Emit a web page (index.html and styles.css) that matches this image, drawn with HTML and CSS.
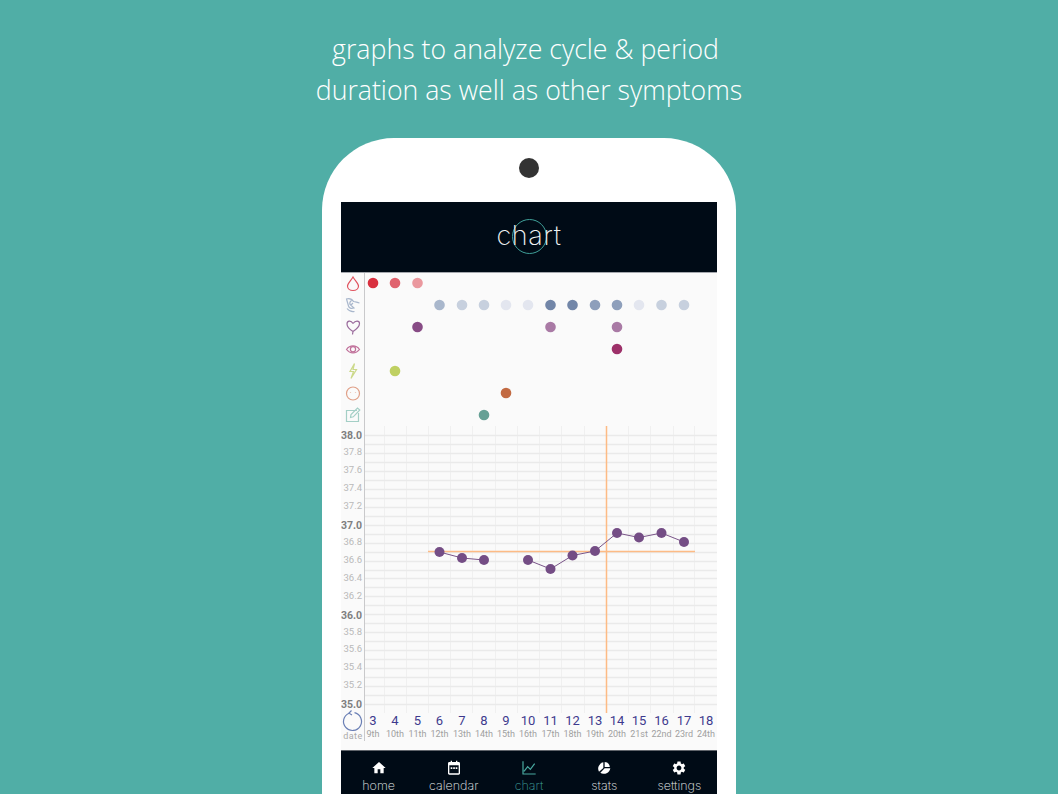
FILE: index.html
```html
<!DOCTYPE html>
<html lang="en">
<head>
<meta charset="utf-8">
<title>chart</title>
<link rel="stylesheet" href="styles.css">
</head>
<body>
<h1 class="headline">graphs to analyze cycle &amp; period&nbsp;<br>duration as well as other symptoms</h1>
<div class="phone">
  <div class="camera"></div>
  <div class="screen">
    <header class="appbar"><span class="ring"></span><span class="apptitle">chart</span></header>
    <svg class="chart" width="376" height="477" viewBox="341 273 376 477">
      <!-- vertical grid -->
      <g class="grid-v">
        <path d="M384.5 426V713M406.5 426V713M428.5 426V713M450.5 426V713M472.5 426V713M495.5 426V713M517.5 426V713M539.5 426V713M561.5 426V713M584.5 426V713M628.5 426V713M650.5 426V713M673.5 426V713M694.5 426V713"/>
      </g>
      <g class="grid-h">
        <path d="M365 435.500H717M365 444.500H717M365 453.500H717M365 462.500H717M365 471.500H717M365 480.500H717M365 489.500H717M365 498.500H717M365 507.500H717M365 516.500H717M365 525.500H717M365 534.500H717M365 543.500H717M365 552.500H717M365 561.500H717M365 570.500H717M365 578.500H717M365 587.500H717M365 596.500H717M365 605.500H717M365 614.500H717M365 623.500H717M365 632.500H717M365 641.500H717M365 650.500H717M365 659.500H717M365 668.500H717M365 677.500H717M365 686.500H717M365 695.500H717M365 704.500H717"/>
      </g>
      <path class="axis" d="M364.500 273V741"/>
      <path class="refline" d="M428 551.500H695M606.500 426V713"/>
      <polyline class="templine" points="439.500,552 462,558 484,560"/>
      <polyline class="templine" points="528,560 550.500,569 572.500,555.500 595,551 617,533 639,537.500 661.500,533 684,542"/>
      <g class="temp">
        <circle cx="439.500" cy="552" r="5"/><circle cx="462" cy="558" r="5"/><circle cx="484" cy="560" r="5"/>
        <circle cx="528" cy="560" r="5"/><circle cx="550.500" cy="569" r="5"/><circle cx="572.500" cy="555.500" r="5"/>
        <circle cx="595" cy="551" r="5"/><circle cx="617" cy="533" r="5"/><circle cx="639" cy="537.500" r="5"/>
        <circle cx="661.500" cy="533" r="5"/><circle cx="684" cy="542" r="5"/>
      </g>

      <!-- symptom dots -->
      <g class="dots">
        <circle class="d-red1" cx="373" cy="283"/><circle class="d-red2" cx="395" cy="283"/><circle class="d-red3" cx="417.500" cy="283"/>
        <circle class="d-b2" cx="439.500" cy="305"/><circle class="d-b3" cx="462" cy="305"/><circle class="d-b3" cx="484" cy="305"/>
        <circle class="d-b4" cx="506" cy="305"/><circle class="d-b4" cx="528" cy="305"/><circle class="d-b0" cx="550.500" cy="305"/>
        <circle class="d-b0" cx="572.500" cy="305"/><circle class="d-b1" cx="595" cy="305"/><circle class="d-b1" cx="617" cy="305"/>
        <circle class="d-b4" cx="639" cy="305"/><circle class="d-b3" cx="661.500" cy="305"/><circle class="d-b3" cx="684" cy="305"/>
        <circle class="d-p0" cx="417.500" cy="327"/><circle class="d-p1" cx="550.500" cy="327"/><circle class="d-p1" cx="617" cy="327"/>
        <circle class="d-mag" cx="617" cy="349"/>
        <circle class="d-lime" cx="395" cy="371"/>
        <circle class="d-org" cx="506" cy="393"/>
        <circle class="d-teal" cx="484" cy="415"/>
      </g>

      <!-- symptom icons -->
      <g class="ic ic-red"><path d="M353 277C350.500 281 347.500 283.500 347.500 286C347.500 288.800 350 290.500 353 290.500C356 290.500 358.500 288.800 358.500 286C358.500 283.500 355.500 281 353 277Z"/></g>
      <g class="ic ic-blue"><path d="M346 299C349 298 352 299 353.500 301.500C355 301.500 357 302.500 359.500 303M346.500 299L348.500 306C349 308 351 309 354 308L350 304.500C349.500 303 350 301.500 351.500 300.500M353 303L351 305M347 308.500C349 311 352 312 354.500 311.500"/></g>
      <g class="ic ic-purple"><path d="M353 323.500C351 320 347 320.500 347 324C347 327.500 350.500 330 353 331.500L352.500 334.500M353 331.500C356 329.500 359.500 327 359.500 323.500C359.500 320.500 355.500 320 353 323.500"/></g>
      <g class="ic ic-mag"><path d="M346.500 349.500C350 344.800 356 344.800 359.500 349.500C356 354 350 354 346.500 349.500Z"/><circle cx="353" cy="349.300" r="2.600"/></g>
      <g class="ic ic-lime"><path d="M354.500 363.500L350 371.500H353.500L351 378.500L356.500 369.500H353Z"/></g>
      <g class="ic ic-org"><circle cx="353" cy="393.500" r="6.500"/><path d="M350.500 392.500V393M355.500 392.500V393"/></g>
      <g class="ic ic-teal"><path d="M357 410.500H346.500V421.500H358.500V413"/><path d="M350.500 417.500L351 414.500L357.500 408L359.800 410L353.300 416.800Z"/></g>

      <!-- temperature axis -->
      <g class="t-major">
        <text x="362" y="439">38.0</text><text x="362" y="529">37.0</text><text x="362" y="619">36.0</text><text x="362" y="708">35.0</text>
      </g>
      <g class="t-minor">
        <text x="362" y="455">37.8</text><text x="362" y="473">37.6</text><text x="362" y="491">37.4</text><text x="362" y="509">37.2</text>
        <text x="362" y="545">36.8</text><text x="362" y="563">36.6</text><text x="362" y="581">36.4</text><text x="362" y="599">36.2</text>
        <text x="362" y="635">35.8</text><text x="362" y="652">35.6</text><text x="362" y="670">35.4</text><text x="362" y="688">35.2</text>
      </g>

      <!-- cycle day / date -->
      <path class="cycle" d="M349 713.200A9 9 0 1 0 354.500 712.700"/>
      <path class="cycle" d="M351.500 710.500L349 713.200L352 715"/>
      <text class="datelabel" x="353" y="739">date</text>
      <g class="day">
        <text x="373" y="725">3</text><text x="395" y="725">4</text><text x="417.500" y="725">5</text><text x="439.500" y="725">6</text>
        <text x="462" y="725">7</text><text x="484" y="725">8</text><text x="506" y="725">9</text><text x="528" y="725">10</text>
        <text x="550.500" y="725">11</text><text x="572.500" y="725">12</text><text x="595" y="725">13</text><text x="617" y="725">14</text>
        <text x="639" y="725">15</text><text x="661.500" y="725">16</text><text x="684" y="725">17</text><text x="706" y="725">18</text>
      </g>
      <g class="date">
        <text x="373" y="737">9th</text><text x="395" y="737">10th</text><text x="417.500" y="737">11th</text><text x="439.500" y="737">12th</text>
        <text x="462" y="737">13th</text><text x="484" y="737">14th</text><text x="506" y="737">15th</text><text x="528" y="737">16th</text>
        <text x="550.500" y="737">17th</text><text x="572.500" y="737">18th</text><text x="595" y="737">19th</text><text x="617" y="737">20th</text>
        <text x="639" y="737">21st</text><text x="661.500" y="737">22nd</text><text x="684" y="737">23rd</text><text x="706" y="737">24th</text>
      </g>
    </svg>
    <nav class="tabs">
      <div class="tab">
        <svg class="tabicon" viewBox="0 0 24 24"><path d="M10 20v-6h4v6h5v-8h3L12 3 2 12h3v8z"/></svg>
        <span>home</span>
      </div>
      <div class="tab">
        <svg class="tabicon" viewBox="0 0 24 24"><path fill-rule="evenodd" d="M7 1h2v2h6V1h2v2h2c1.100 0 2 .9 2 2v15c0 1.100-.9 2-2 2H5c-1.100 0-2-.9-2-2V5c0-1.100.9-2 2-2h2zM5 8v12h14V8zM7 11h2.500v2.500H7zM10.800 11h2.500v2.500h-2.500zM14.500 11H17v2.500h-2.500z"/></svg>
        <span>calendar</span>
      </div>
      <div class="tab tab-active">
        <svg class="tabicon" viewBox="0 0 24 24"><path class="tabstroke" d="M3 2v19h19M4.500 17l5.500-7 4 4 6.500-8.500"/></svg>
        <span>chart</span>
      </div>
      <div class="tab">
        <svg class="tabicon" viewBox="0 0 24 24"><path d="M11 3.500V12L4.500 17.500A9.500 9.500 0 0 1 11 3.500ZM13 3V10.500H20.800A8.500 8.500 0 0 0 13 3ZM21.500 12.500H13L6.500 19A9.500 9.500 0 0 0 21.500 12.500Z"/></svg>
        <span>stats</span>
      </div>
      <div class="tab">
        <svg class="tabicon" viewBox="0 0 24 24"><path d="M19.140 12.940c.04-.3.06-.61.06-.94 0-.32-.02-.64-.07-.94l2.030-1.580c.18-.14.23-.41.12-.61l-1.920-3.320c-.12-.22-.37-.29-.59-.22l-2.390.96c-.5-.38-1.030-.7-1.620-.94l-.36-2.540c-.04-.24-.24-.41-.48-.41h-3.840c-.24 0-.43.17-.47.41l-.36 2.540c-.59.24-1.130.57-1.620.94l-2.390-.96c-.22-.08-.47 0-.59.22L2.740 8.870c-.12.21-.08.47.12.61l2.030 1.580c-.05.3-.09.63-.09.94s.02.64.07.94l-2.030 1.580c-.18.14-.23.41-.12.61l1.920 3.320c.12.22.37.29.59.22l2.390-.96c.5.38 1.030.7 1.620.94l.36 2.540c.05.24.24.41.48.41h3.840c.24 0 .44-.17.47-.41l.36-2.540c.59-.24 1.130-.56 1.620-.94l2.390.96c.22.08.47 0 .59-.22l1.920-3.320c.12-.22.07-.47-.12-.61l-2.010-1.580zM12 15.600c-1.980 0-3.600-1.620-3.600-3.600s1.620-3.600 3.600-3.600 3.600 1.620 3.600 3.600-1.620 3.600-3.600 3.600z"/></svg>
        <span>settings</span>
      </div>
    </nav>
  </div>
</div>
</body>
</html>
```

FILE: styles.css
```css
* { box-sizing: border-box; }
html, body { margin: 0; height: 100%; overflow: hidden; }
body {
  background: #50aea6;
  font-family: "Open Sans", sans-serif;
  display: flex;
  flex-direction: column;
  align-items: center;
}
.headline {
  margin: 28px 0 28px;
  font-size: 26.700px;
  line-height: 41px;
  font-weight: 300;
  color: #fff;
  text-align: center;
}
.phone {
  flex: none;
  width: 414px;
  height: 720px;
  background: #fff;
  border-radius: 72px 72px 0 0;
  padding-top: 20px;
  display: flex;
  flex-direction: column;
  align-items: center;
}
.camera {
  width: 20px;
  height: 20px;
  border-radius: 50%;
  background: #333;
  margin-bottom: 24px;
}
.screen { width: 376px; background: #fafafa; }
.appbar {
  position: relative;
  height: 71px;
  background: #000b16;
  border-bottom: 1px solid #a5a8ae;
  display: flex;
  align-items: center;
  justify-content: center;
  padding-bottom: 4px;
}
.ring {
  position: absolute;
  left: 171px;
  top: 17px;
  width: 35px;
  height: 35px;
  border: 1px solid #3f9f98;
  border-radius: 50%;
}
.apptitle {
  position: relative;
  font-family: "Inter", sans-serif;
  font-weight: 200;
  font-size: 27px;
  letter-spacing: .6px;
  color: #eef1f3;
}
.chart { display: block; }
.grid-v path { stroke: #f0f0f0; fill: none; }
.grid-h path { stroke: #eaeaea; stroke-width: 1.300; fill: none; }
.axis { stroke: #c9c9cb; fill: none; }
.refline { stroke: #fdbb85; stroke-width: 1.500; fill: none; }
.templine { stroke: #7a5589; fill: none; }
.temp circle { fill: #744d85; }
.dots circle { r: 5.300px; }
.d-red1 { fill: #d9303f; }
.d-red2 { fill: #e0636e; }
.d-red3 { fill: #ea989e; }
.d-b0 { fill: #7286a8; }
.d-b1 { fill: #8e9fbb; }
.d-b2 { fill: #a9b7cc; }
.d-b3 { fill: #c7d0de; }
.d-b4 { fill: #e3e6ef; }
.d-p0 { fill: #874b85; }
.d-p1 { fill: #a97aa5; }
.d-mag { fill: #9d3069; }
.d-lime { fill: #bfd062; }
.d-org { fill: #c26a42; }
.d-teal { fill: #66a095; }
.ic { fill: none; stroke-width: 1.200; }
.ic-red { stroke: #e0535f; }
.ic-blue { stroke: #a9b7cc; }
.ic-purple { stroke: #9a6a9c; }
.ic-mag { stroke: #c0709a; }
.ic-lime { stroke: #ccd98a; }
.ic-org { stroke: #e0a088; }
.ic-teal { stroke: #a4cfc6; }
.t-major text, .t-minor text { font-family: "Roboto", sans-serif; text-anchor: end; }
.t-major text { font-size: 10.500px; font-weight: 700; fill: #7f7f7f; }
.t-minor text { font-size: 9.500px; fill: #b9b9b9; }
.cycle { fill: none; stroke: #6a7fb5; stroke-width: 1.200; }
.datelabel { font-family: "Roboto", sans-serif; font-size: 9px; fill: #aaa; text-anchor: middle; letter-spacing: .4px; }
.day text { font-family: "Roboto", sans-serif; font-size: 13px; fill: #3e3a8e; text-anchor: middle; }
.date text { font-family: "Roboto", sans-serif; font-size: 9px; fill: #a0a0a0; text-anchor: middle; }
.tabs {
  height: 44px;
  background: #000b16;
  border-top: 1px solid #60656b;
  display: flex;
}
.tab {
  flex: 1;
  display: flex;
  flex-direction: column;
  align-items: center;
  padding-top: 9px;
  color: #e4e8ea;
  font-family: "Inter", sans-serif;
  font-weight: 200;
  font-size: 12.500px;
  line-height: 16px;
}
.tabicon { width: 18px; height: 18px; fill: #fff; margin-bottom: 2px; }
.tab-active { color: #3f9f98; }
.tabstroke { fill: none; stroke: #48a9a0; stroke-width: 1.800; }
```
